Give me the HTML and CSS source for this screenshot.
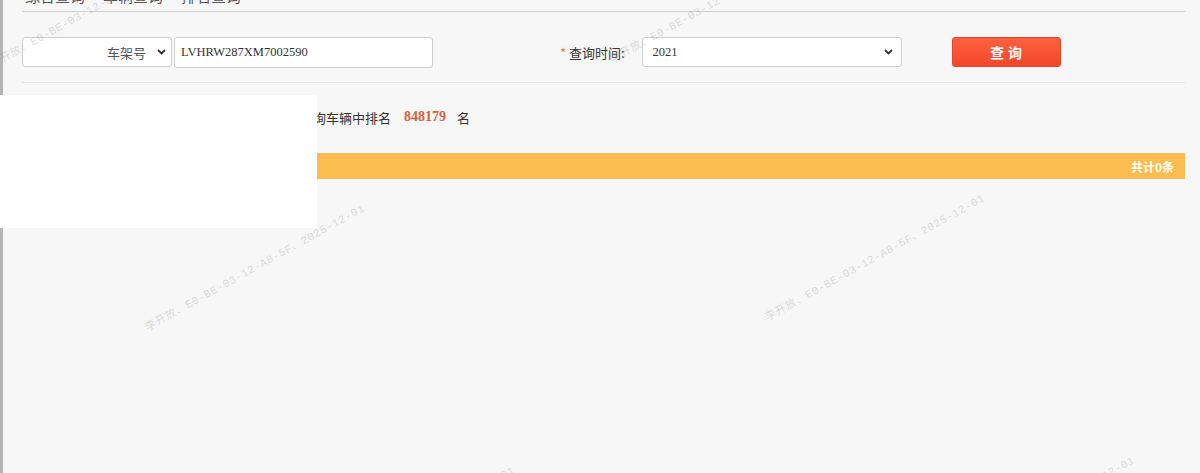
FILE: index.html
```html
<!DOCTYPE html>
<html lang="zh-CN">
<head>
<meta charset="utf-8">
<title>车辆排名查询</title>
<link rel="stylesheet" href="styles.css">
</head>
<body>
<div class="page">
  <div class="crumb"><span class="crumb-text">综合查询</span><span class="crumb-text">车辆查询</span><span class="crumb-text">排名查询</span></div>

  <div class="form-row">
    <div class="select type-select">
      <span class="select-text">车架号</span>
      <svg class="chev" width="9" height="6" viewBox="0 0 9 6"><path d="M1 1 L4.5 4.5 L8 1" fill="none" stroke="#333" stroke-width="1.8"/></svg>
    </div>
    <div class="input">LVHRW287XM7002590</div>
    <div class="label"><span class="star">*</span> 查询时间:</div>
    <div class="select year-select">
      <span class="select-text serif">2021</span>
      <svg class="chev" width="9" height="6" viewBox="0 0 9 6"><path d="M1 1 L4.5 4.5 L8 1" fill="none" stroke="#333" stroke-width="1.8"/></svg>
    </div>
    <div class="btn">查询</div>
  </div>

  <div class="rank-row">
    <span class="rank-prefix">该车辆在本年度所有查</span><span>询车辆中排名</span><span class="rank-num">848179</span><span>名</span>
  </div>

  <div class="result-bar"><span>共计0条</span></div>
</div>

<div class="mask"></div>

<div class="wm" style="left:-30px;top:-2px">李开放、E0-BE-03-12-A8-5F、2025-12-01</div>
<div class="wm" style="left:590px;top:-7px">李开放、E0-BE-03-12-A8-5F、2025-12-01</div>
<div class="wm" style="left:125px;top:261px">李开放、E0-BE-03-12-A8-5F、2025-12-01</div>
<div class="wm" style="left:745px;top:251px">李开放、E0-BE-03-12-A8-5F、2025-12-01</div>
<div class="wm" style="left:275px;top:523px">李开放、E0-BE-03-12-A8-5F、2025-12-01</div>
<div class="wm" style="left:895px;top:513px">李开放、E0-BE-03-12-A8-5F、2025-12-01</div>
</body>
</html>
```

FILE: styles.css
```css
html, body {
  margin: 0;
  padding: 0;
  background: #f7f7f7;
}
html {
  overflow: hidden;
}
body {
  position: relative;
  width: 1200px;
  height: 473px;
  overflow: hidden;
  font-family: "Noto Sans CJK SC", "Noto Sans", sans-serif;
  color: #333;
}
.page {
  border-left: 3px solid #b4b4b4;
  height: 473px;
  box-sizing: border-box;
  padding: 0 15px 0 19px;
}
.crumb {
  height: 11px;
  overflow: hidden;
  border-bottom: 1px solid #cfcfcf;
  display: flex;
  gap: 18px;
  padding-left: 3px;
}
.crumb-text {
  display: block;
  font-size: 15px;
  line-height: 15px;
  margin-top: -12px;
  color: #555;
}
.form-row {
  margin-top: 25px;
  display: flex;
  align-items: center;
  height: 30px;
}
.select {
  box-sizing: border-box;
  height: 30px;
  background: #fff;
  border: 1px solid #cdcdcd;
  border-radius: 3px;
  display: flex;
  align-items: center;
}
.type-select {
  width: 150px;
  justify-content: flex-end;
  padding-right: 5px;
}
.type-select .select-text {
  font-size: 13px;
  color: #555;
  margin-right: 11px;
}
.year-select {
  width: 260px;
  margin-left: 17px;
  justify-content: space-between;
  padding: 0 8px 0 10px;
}
.serif {
  font-family: "Liberation Serif", "Noto Sans CJK SC", serif;
  font-size: 12.5px;
  color: #333;
}
.chev {
  display: block;
}
.input {
  box-sizing: border-box;
  width: 259px;
  height: 31px;
  margin-left: 2px;
  background: #fff;
  border: 1px solid #cdcdcd;
  border-radius: 3px;
  padding-left: 6px;
  display: flex;
  align-items: center;
  font-family: "Liberation Serif", serif;
  font-size: 12.5px;
  color: #333;
}
.label {
  margin-left: 127px;
  font-size: 13px;
  color: #333;
}
.star {
  color: #f0784e;
}
.btn {
  box-sizing: border-box;
  width: 109px;
  height: 30px;
  margin-left: 50px;
  border: 1px solid #e5452b;
  border-radius: 3px;
  background: linear-gradient(#ff6040, #f2472b);
  color: #fff;
  font-size: 14px;
  font-weight: bold;
  letter-spacing: 4px;
  text-indent: 4px;
  display: flex;
  align-items: center;
  justify-content: center;
}
.rank-row {
  margin-top: 15px;
  border-top: 1px solid #e6e6e6;
  padding-top: 26px;
  height: 16px;
  display: flex;
  align-items: center;
  font-size: 13px;
  color: #333;
  padding-left: 161px;
}
.rank-num {
  font-family: "Liberation Serif", serif;
  font-weight: bold;
  font-size: 14px;
  color: #d9603b;
  margin: 0 11px 0 13px;
}
.result-bar {
  margin-top: 28px;
  height: 26px;
  background: #fbbd4f;
  display: flex;
  align-items: center;
  justify-content: flex-end;
  padding-right: 11px;
  color: #fff;
  font-size: 12px;
  font-weight: bold;
}
.mask {
  position: absolute;
  left: 0;
  top: 95px;
  width: 317px;
  height: 133px;
  background: #fff;
}
.wm {
  position: absolute;
  width: 260px;
  text-align: center;
  font-family: "Liberation Mono", "Noto Sans CJK SC", monospace;
  font-size: 11px;
  line-height: 14px;
  letter-spacing: 0.5px;
  color: rgba(150, 150, 150, 0.32);
  transform: rotate(-29deg);
  transform-origin: center center;
  white-space: nowrap;
  pointer-events: none;
}
```
